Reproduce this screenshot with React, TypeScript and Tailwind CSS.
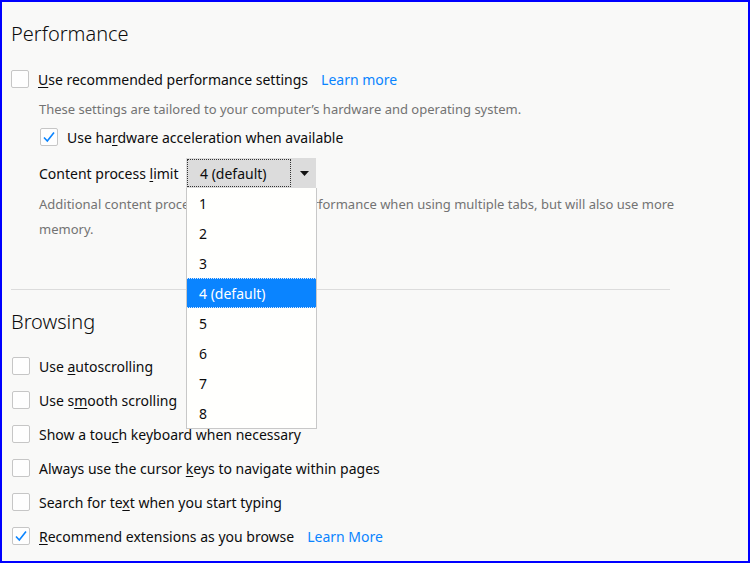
import React from "react";

const font = { fontFamily: '"Segoe UI", "Noto Sans", "Open Sans", sans-serif' };

const Check = ({ checked }: { checked?: boolean }) => (
  <span className="flex h-[18px] w-[18px] shrink-0 items-center justify-center rounded-[2px] border border-[#c6c6c6] bg-[#fefefe]">
    {checked && (
      <svg width="14" height="14" viewBox="0 0 14 14" fill="none">
        <path d="M2 7.5 L5.3 11 L12 2.5" stroke="#0a84ff" strokeWidth="1.6" />
      </svg>
    )}
  </span>
);

const U = ({ children }: { children: React.ReactNode }) => (
  <span className="underline underline-offset-2">{children}</span>
);

const Row = ({
  checked,
  children,
  link,
}: {
  checked?: boolean;
  children: React.ReactNode;
  link?: string;
}) => (
  <div className="flex h-[34px] items-center">
    <Check checked={checked} />
    <span className="ml-[9px] text-[14px] text-[#0c0c0d]">{children}</span>
    {link && <span className="ml-[13px] text-[14px] text-[#0a84ff]">{link}</span>}
  </div>
);

const options = ["1", "2", "3", "4 (default)", "5", "6", "7", "8"];

export default function App() {
  return (
    <div
      className="h-[563px] w-[750px] overflow-hidden border-2 border-[#0000ff] bg-[#f9f9f8] pl-[9px]"
      style={font}
    >
      <div className="pt-[18px] text-[20px] font-light leading-[28px] text-[#0c0c0d]">Performance</div>

      <div className="mt-[14px]">
        <Row link="Learn more">
          <U>U</U>se recommended performance settings
        </Row>
      </div>
      <div className="ml-[28px] mt-[2px] text-[13px] leading-[22px] text-[#737373]">
        These settings are tailored to your computer’s hardware and operating system.
      </div>
      <div className="ml-[29px] mt-[3px] flex h-[28px] items-center">
        <Check checked />
        <span className="ml-[9px] text-[14px] text-[#0c0c0d]">
          Use ha<U>r</U>dware acceleration when available
        </span>
      </div>

      <div className="ml-[28px] mt-[7px] flex h-[30px] items-center">
        <span className="w-[147px] whitespace-nowrap text-[14px] text-[#0c0c0d]">
          Content process <U>l</U>imit
        </span>
        <div className="relative z-10">
          <div className="flex h-[30px] w-[130px] bg-[#dcdcdc]">
            <div className="m-[1px] flex flex-1 items-center border border-dotted border-[#333] pl-[12px] text-[14px] text-[#0c0c0d]">
              4 (default)
            </div>
            <div className="flex w-[24px] items-center justify-center">
              <svg width="9" height="5" viewBox="0 0 9 5">
                <path d="M0 0 H9 L4.5 5 Z" fill="#111" />
              </svg>
            </div>
          </div>
          <div className="absolute left-0 top-full w-[131px] border border-t-0 border-[#c8c8c8] bg-[#fffffd]">
            {options.map((o) => (
              <div
                key={o}
                className={
                  o === "4 (default)"
                    ? "flex h-[30px] items-center border-y border-dotted border-[#d8e8ff] bg-[#0a84ff] pl-[12px] text-[14px] text-white"
                    : "flex h-[30px] items-center pl-[12px] text-[14px] text-[#0c0c0d]"
                }
              >
                {o}
              </div>
            ))}
          </div>
        </div>
      </div>

      <div className="ml-[28px] mt-[4px] w-[636px] text-[13px] leading-[25px] text-[#737373]">
        Additional content processes can improve performance when using multiple tabs, but will also use more memory.
      </div>

      <div className="mt-[47px] h-px w-[659px] bg-[#dcdcdc]" />

      <div className="mt-[18px] text-[20px] font-light leading-[28px] text-[#0c0c0d]">Browsing</div>

      <div className="mt-[13px] pl-[1px]">
        <Row>
          Use <U>a</U>utoscrolling
        </Row>
        <Row>
          Use s<U>m</U>ooth scrolling
        </Row>
        <Row>
          Show a tou<U>c</U>h keyboard when necessary
        </Row>
        <Row>
          Always use the cursor <U>k</U>eys to navigate within pages
        </Row>
        <Row>
          Search for te<U>x</U>t when you start typing
        </Row>
        <Row checked link="Learn More">
          <U>R</U>ecommend extensions as you browse
        </Row>
      </div>
    </div>
  );
}
